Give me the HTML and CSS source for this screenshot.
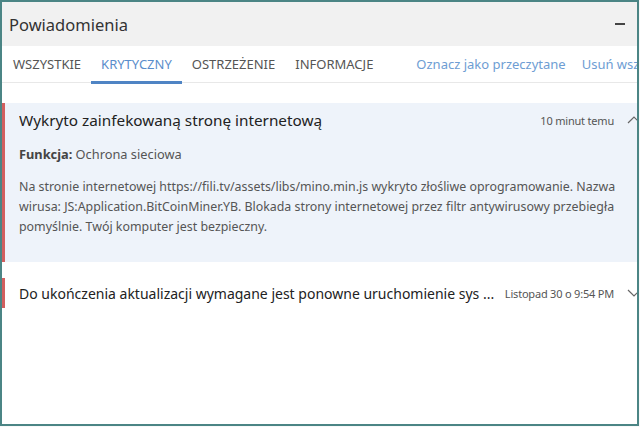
FILE: index.html
```html
<!DOCTYPE html>
<html lang="pl">
<head>
    <meta charset="UTF-8">
    <meta name="viewport" content="width=device-width, initial-scale=1.0">
    <title>Powiadomienia</title>
    <link rel="stylesheet" href="styles.css">
</head>
<body>
    <div class="window">
        <div class="titlebar">
            <h1>Powiadomienia</h1>
            <span class="minimize"></span>
        </div>

        <div class="toolbar">
            <ul class="tabs">
                <li>WSZYSTKIE</li>
                <li class="active">KRYTYCZNY</li>
                <li>OSTRZEŻENIE</li>
                <li>INFORMACJE</li>
            </ul>
            <div class="actions">
                <a href="#">Oznacz jako przeczytane</a>
                <a href="#">Usuń wszystkie</a>
            </div>
        </div>

        <div class="list">
            <div class="item expanded">
                <div class="item-head">
                    <span class="item-title">Wykryto zainfekowaną stronę internetową</span>
                    <span class="item-time">10 minut temu</span>
                    <svg class="chevron" width="14" height="14" viewBox="0 0 14 14">
                        <polyline points="1,10 7,4 13,10" fill="none" stroke="#666" stroke-width="1.2"/>
                    </svg>
                </div>
                <p class="feature"><b>Funkcja:</b> Ochrona sieciowa</p>
                <p class="details">Na stronie internetowej https://fili.tv/assets/libs/mino.min.js wykryto złośliwe oprogramowanie. Nazwa wirusa: JS:Application.BitCoinMiner.YB. Blokada strony internetowej przez filtr antywirusowy przebiegła pomyślnie. Twój komputer jest bezpieczny.</p>
            </div>

            <div class="item">
                <div class="item-head">
                    <span class="item-title small">Do ukończenia aktualizacji wymagane jest ponowne uruchomienie sys ...</span>
                    <span class="item-time">Listopad 30 o 9:54 PM</span>
                    <svg class="chevron" width="14" height="14" viewBox="0 0 14 14">
                        <polyline points="1,4 7,10 13,4" fill="none" stroke="#666" stroke-width="1.2"/>
                    </svg>
                </div>
            </div>
        </div>
    </div>
</body>
</html>
```

FILE: styles.css
```css
html, body {
    margin: 0;
    padding: 0;
    background: #f7f9f9;
}
body {
    font-family: "Noto Sans", "Open Sans", sans-serif;
    color: #333;
}
.window {
    box-sizing: border-box;
    width: 639px;
    height: 426px;
    border: 2px solid #4b8585;
    background: #fff;
    overflow: hidden;
}
.titlebar {
    display: flex;
    align-items: center;
    height: 44px;
    padding: 0 12px 0 7px;
    background: #f1f1f1;
}
.titlebar h1 {
    flex: 1;
    margin: 0;
    font-size: 16.5px;
    font-weight: normal;
    color: #333;
}
.minimize {
    width: 10px;
    height: 2px;
    background: #444;
}
.toolbar {
    display: flex;
    align-items: stretch;
    height: 36px;
    border-bottom: 1px solid #e8e8e8;
    white-space: nowrap;
}
.tabs {
    display: flex;
    margin: 0;
    padding: 0 0 0 1px;
    list-style: none;
}
.tabs li {
    display: flex;
    align-items: center;
    padding: 0 10px;
    font-size: 13px;
    color: #555;
    border-bottom: 3px solid transparent;
    margin-bottom: -2px;
}
.tabs li.active {
    color: #5a8dcb;
    border-bottom-color: #4f84c4;
}
.actions {
    display: flex;
    align-items: center;
    gap: 16px;
    margin-left: 33px;
}
.actions a {
    font-size: 13px;
    color: #6e9dd3;
    text-decoration: none;
}
.list {
    padding-top: 20px;
}
.item {
    border-left: 3px solid #d25f5f;
    padding: 0 0 0 14px;
}
.item + .item {
    margin-top: 16px;
}
.item.expanded {
    background: #eef3fa;
    padding-bottom: 25px;
}
.item-head {
    display: flex;
    align-items: center;
    height: 34px;
}
.item + .item .item-head {
    height: 30px;
}
.item-title {
    flex: 1;
    font-size: 15.3px;
    color: #222;
    white-space: nowrap;
    overflow: hidden;
}
.item-title.small {
    font-size: 14px;
}
.item-time {
    margin-left: 10px;
    font-size: 11px;
    letter-spacing: -0.2px;
    color: #555;
}
.chevron {
    margin-left: 13px;
    margin-right: -4px;
}
.feature {
    margin: 7px 0 0;
    font-size: 12.8px;
    line-height: 20px;
    color: #555;
}
.feature b {
    color: #444;
}
.details {
    margin: 13px 0 0;
    padding-right: 8px;
    font-size: 12.4px;
    line-height: 20px;
    color: #555;
}
```
